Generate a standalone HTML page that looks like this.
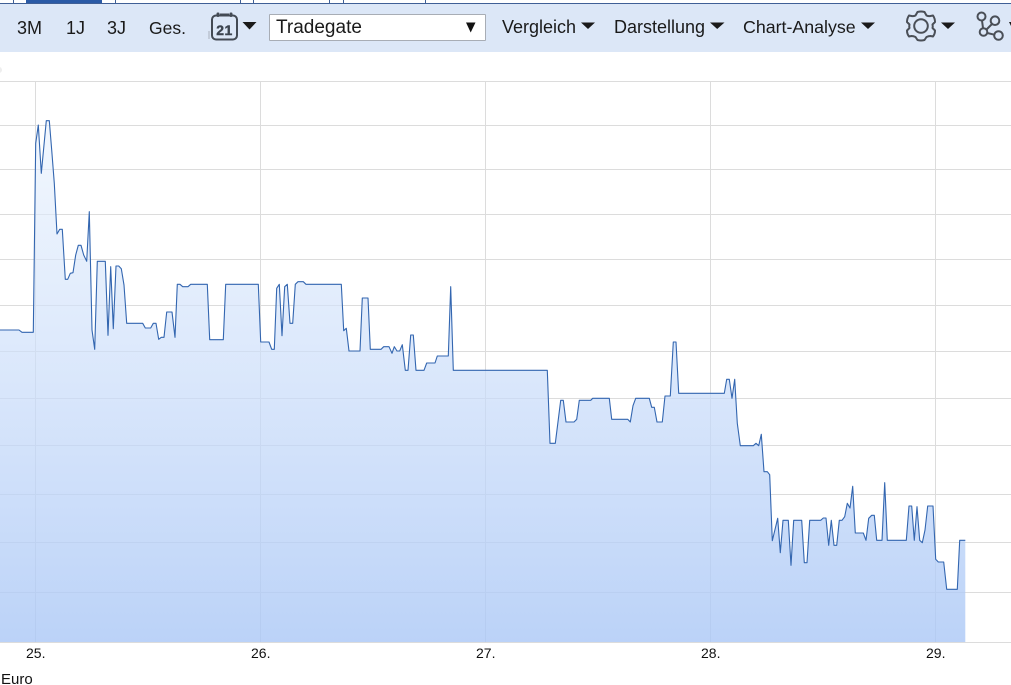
<!DOCTYPE html>
<html>
<head>
<meta charset="utf-8">
<style>
html,body{margin:0;padding:0;background:#fff;width:1011px;height:685px;overflow:hidden}
body{position:relative;font-family:"Liberation Sans",Arial,sans-serif;color:#111}
.t{position:absolute;font-size:18px;line-height:18px;white-space:nowrap;color:#1a1a1a}
.x{position:absolute;font-size:14px;line-height:14px;white-space:nowrap;color:#111}
svg{position:absolute;left:0;top:0}
</style>
</head>
<body>
<svg width="1011" height="685" viewBox="0 0 1011 685" xmlns="http://www.w3.org/2000/svg">
<defs>
<linearGradient id="g" gradientUnits="userSpaceOnUse" x1="0" y1="120" x2="0" y2="642">
<stop offset="0" stop-color="#e9f2fd" stop-opacity="0.6"/>
<stop offset="1" stop-color="#aac7f6" stop-opacity="0.8"/>
</linearGradient>
</defs>
<rect x="0" y="3" width="1011" height="49" fill="#dce7f7"/>
<rect x="0" y="3" width="1011" height="1" fill="#3f5f96"/>
<rect x="26" y="0" width="76" height="3" fill="#2a5aa6"/>
<g fill="#3f5f96">
<rect x="13" y="0" width="1" height="3"/><rect x="115" y="0" width="1" height="3"/><rect x="240" y="0" width="1" height="3"/><rect x="253" y="0" width="1" height="3"/><rect x="329" y="0" width="1" height="3"/><rect x="343" y="0" width="1" height="3"/><rect x="425" y="0" width="1" height="3"/>
</g>
<circle cx="-1" cy="70" r="3" fill="#eeeeee"/>
<g fill="#dcdcdc">
<rect x="0" y="81" width="1011" height="1"/><rect x="0" y="125" width="1011" height="1"/><rect x="0" y="169" width="1011" height="1"/><rect x="0" y="214" width="1011" height="1"/><rect x="0" y="259" width="1011" height="1"/><rect x="0" y="305" width="1011" height="1"/><rect x="0" y="351" width="1011" height="1"/><rect x="0" y="398" width="1011" height="1"/><rect x="0" y="445" width="1011" height="1"/><rect x="0" y="494" width="1011" height="1"/><rect x="0" y="542" width="1011" height="1"/><rect x="0" y="592" width="1011" height="1"/><rect x="0" y="642" width="1011" height="1"/>
<rect x="35" y="81" width="1" height="561"/><rect x="260" y="81" width="1" height="561"/><rect x="485" y="81" width="1" height="561"/><rect x="710" y="81" width="1" height="561"/><rect x="935" y="81" width="1" height="561"/>
</g>
<path fill="url(#g)" d="M0,330 L19,330 22,332.3 33.3,332.3 35.7,143.3 38.3,125 41.3,173.3 46.3,120.7 49.3,120.7 51.7,150 54.3,183.3 57,234 59.7,229.3 62.3,229.3 65.3,279.3 67.7,279.3 70.3,273.3 73,272.7 75.7,255 78.3,245.3 81,245.3 83.7,255 86.7,261.3 89.3,211.7 92,330 94.7,349.3 97.3,261.3 105.3,261.3 108,335.3 110.7,266.7 113.3,328.7 116,266 118.7,266 121.3,268.7 124,285 126.7,323.3 142.7,323.3 145.3,328 150.7,328 153.3,323.3 156,323.3 158.7,339.3 161.3,337.3 164,337.3 166.7,312 172,312 175,337.3 177.3,284.3 180,284.3 182.7,286.7 188,286.7 190.7,284.3 207.3,284.3 209.7,339.7 223.3,339.7 225.7,284.3 258.3,284.3 260.7,342 269,342 271.7,349.3 274.3,349.3 276.7,288.3 279.3,284.3 282,335.7 284.7,286.7 287.3,284.3 290,323.3 292.7,323.3 295.3,284.3 298,281.7 303.3,281.7 306,284.3 341.3,284.3 343.7,330.7 346.3,328.3 349,351 360,351 362.3,298 368,298 370.3,349.3 381,349.3 383.7,346.7 389,346.7 392,353.3 394.3,346.7 397,351 399.7,351 402.3,344.7 405.3,370.3 408,370.3 410.7,335 413.3,335 416,370.3 424,370.3 426.7,363 435,363 437.3,356 448.3,356 450.7,286.7 453.3,370.3 547.3,370.3 550,443.3 555.3,443.3 560.7,400.3 563.3,400.3 566,422 574,422 576.7,419.3 579.3,400.3 590.7,400.3 592.7,398.3 609.3,398.3 611.7,419.3 627.7,419.3 630.3,422 633,405.7 635.7,398.3 649.3,398.3 651.7,407.3 654.3,407.3 657,422 662.3,422 665,396 670.3,396 673.3,342 676,342 678.7,393.3 724.3,393.3 726.7,379.3 729.3,379.3 732,398.3 734.7,379.3 737.3,423.3 740.3,445.7 753.3,445.7 756,443.3 758.7,445.7 761.3,434.3 764,471.7 767.3,471.7 769.7,474.7 772.3,540.7 777.7,518.3 780.3,552.7 783,520.3 788.3,520.3 791,565.3 793.7,520.3 801.7,520.3 804.3,562.7 807,562.7 809.7,520.3 820.7,520.3 823.3,518 826,518 828.7,545.3 831.3,520.3 834,545.3 836.7,545.3 839.3,520.3 842,520.3 844.7,516.7 847.3,503.3 850,508 852.7,486.3 855.3,533 863.3,533 866,540.3 868.7,518.3 871.7,515.3 874.3,515.3 876.7,540.3 882,540.3 884.7,482.7 887.3,540.3 906.3,540.3 909,506 911.7,506 914.3,540.3 917,506.7 919.7,540.3 922.3,542.7 925,530 927.7,506 933,506 935.7,559.3 938.3,562 943.7,562 946.7,589.3 957.3,589.3 959.7,540.3 965.3,540.3 L965.3,642 L0,642 Z"/>
<polyline fill="none" stroke="#3366b0" stroke-width="1.1" stroke-linejoin="round" points="0,330 19,330 22,332.3 33.3,332.3 35.7,143.3 38.3,125 41.3,173.3 46.3,120.7 49.3,120.7 51.7,150 54.3,183.3 57,234 59.7,229.3 62.3,229.3 65.3,279.3 67.7,279.3 70.3,273.3 73,272.7 75.7,255 78.3,245.3 81,245.3 83.7,255 86.7,261.3 89.3,211.7 92,330 94.7,349.3 97.3,261.3 105.3,261.3 108,335.3 110.7,266.7 113.3,328.7 116,266 118.7,266 121.3,268.7 124,285 126.7,323.3 142.7,323.3 145.3,328 150.7,328 153.3,323.3 156,323.3 158.7,339.3 161.3,337.3 164,337.3 166.7,312 172,312 175,337.3 177.3,284.3 180,284.3 182.7,286.7 188,286.7 190.7,284.3 207.3,284.3 209.7,339.7 223.3,339.7 225.7,284.3 258.3,284.3 260.7,342 269,342 271.7,349.3 274.3,349.3 276.7,288.3 279.3,284.3 282,335.7 284.7,286.7 287.3,284.3 290,323.3 292.7,323.3 295.3,284.3 298,281.7 303.3,281.7 306,284.3 341.3,284.3 343.7,330.7 346.3,328.3 349,351 360,351 362.3,298 368,298 370.3,349.3 381,349.3 383.7,346.7 389,346.7 392,353.3 394.3,346.7 397,351 399.7,351 402.3,344.7 405.3,370.3 408,370.3 410.7,335 413.3,335 416,370.3 424,370.3 426.7,363 435,363 437.3,356 448.3,356 450.7,286.7 453.3,370.3 547.3,370.3 550,443.3 555.3,443.3 560.7,400.3 563.3,400.3 566,422 574,422 576.7,419.3 579.3,400.3 590.7,400.3 592.7,398.3 609.3,398.3 611.7,419.3 627.7,419.3 630.3,422 633,405.7 635.7,398.3 649.3,398.3 651.7,407.3 654.3,407.3 657,422 662.3,422 665,396 670.3,396 673.3,342 676,342 678.7,393.3 724.3,393.3 726.7,379.3 729.3,379.3 732,398.3 734.7,379.3 737.3,423.3 740.3,445.7 753.3,445.7 756,443.3 758.7,445.7 761.3,434.3 764,471.7 767.3,471.7 769.7,474.7 772.3,540.7 777.7,518.3 780.3,552.7 783,520.3 788.3,520.3 791,565.3 793.7,520.3 801.7,520.3 804.3,562.7 807,562.7 809.7,520.3 820.7,520.3 823.3,518 826,518 828.7,545.3 831.3,520.3 834,545.3 836.7,545.3 839.3,520.3 842,520.3 844.7,516.7 847.3,503.3 850,508 852.7,486.3 855.3,533 863.3,533 866,540.3 868.7,518.3 871.7,515.3 874.3,515.3 876.7,540.3 882,540.3 884.7,482.7 887.3,540.3 906.3,540.3 909,506 911.7,506 914.3,540.3 917,506.7 919.7,540.3 922.3,542.7 925,530 927.7,506 933,506 935.7,559.3 938.3,562 943.7,562 946.7,589.3 957.3,589.3 959.7,540.3 965.3,540.3"/>

<!-- calendar icon -->
<rect x="212" y="15.500" width="25" height="24" rx="4" fill="none" stroke="#434a54" stroke-width="2"/>
<rect x="216.500" y="12.500" width="3" height="4.500" rx="1.200" fill="#434a54"/>
<rect x="229.500" y="12.500" width="3" height="4.500" rx="1.200" fill="#434a54"/>
<rect x="220" y="13.500" width="9" height="1.500" fill="#434a54"/>
<text x="224.500" y="35" text-anchor="middle" font-family="'Liberation Sans',sans-serif" font-weight="700" font-size="14" letter-spacing="0.5" stroke="#3d4550" stroke-width="0.4" fill="#3d4550">21</text>
<rect x="208.500" y="31" width="1" height="8" fill="#aab2be"/>
<!-- carets -->
<g fill="#1a1a1a">
<path d="M242.500,22 L256.500,22 249.500,29.500 Z"/>
<path d="M581,22.500 L595,22.500 588,29 Z"/>
<path d="M710,22.500 L724.500,22.500 717.200,29 Z"/>
<path d="M861,22.500 L875,22.500 868,29 Z"/>
<path d="M941,22.500 L955,22.500 948,29 Z"/>
<path d="M1009,22 L1016,22 1012.500,29 Z"/>
</g>
<!-- gear -->
<path fill="none" stroke="#4a4f57" stroke-width="2" stroke-linejoin="round" d="M917.500,12 Q921,11 924.500,12 L926.500,15.500 Q928.500,16.500 930.500,16 L933,15.500 Q935,18.500 935,22 L932.500,24.500 Q933,26.500 932.500,28 L935,30.500 Q935,34 933,36.500 L930.500,36 Q928.500,36 926.500,37 L924.500,40 Q921,41 917.500,40 L915.500,37 Q913.500,36 911.500,36 L909,36.500 Q907,34 907,30.500 L909.500,28 Q909,26.500 909.500,24.500 L907,22 Q907,18.500 909,15.500 L911.500,16 Q913.500,16.500 915.500,15.500 Z"/>
<circle cx="921" cy="26" r="6.800" fill="none" stroke="#4a4f57" stroke-width="2"/>
<!-- network -->
<g fill="none" stroke="#4a4f57" stroke-width="2">
<circle cx="981.500" cy="16.500" r="4"/>
<circle cx="995" cy="20.700" r="4.300"/>
<circle cx="983.500" cy="32" r="3.800"/>
<circle cx="998.500" cy="35.500" r="4.300"/>
<path d="M982,20.500 L983,28 M992,24 L986.500,29.500 M987.300,33 L994.300,34.700"/>
</g>
</svg>

<div class="t" style="left:17px;top:19px">3M</div>
<div class="t" style="left:66px;top:19px">1J</div>
<div class="t" style="left:107px;top:19px">3J</div>
<div class="t" style="left:149px;top:19px;font-size:17.500px">Ges.</div>

<div style="position:absolute;left:269px;top:14px;width:215px;height:25px;background:#fff;border:1px solid #a8adb5;border-radius:1px"></div>
<div class="t" style="left:276px;top:19px;font-size:19px">Tradegate</div>
<svg width="20" height="20" viewBox="0 0 20 20" style="left:461px;top:18px" xmlns="http://www.w3.org/2000/svg"><path d="M5,4.500 L14.500,4.500 9.700,14.500 Z" fill="#111"/></svg>

<div class="t" style="left:502px;top:18px">Vergleich</div>
<div class="t" style="left:614px;top:18px">Darstellung</div>
<div class="t" style="left:743px;top:18px;font-size:17.800px">Chart-Analyse</div>

<div class="x" style="left:26px;top:646px">25.</div>
<div class="x" style="left:251px;top:646px">26.</div>
<div class="x" style="left:476px;top:646px">27.</div>
<div class="x" style="left:701px;top:646px">28.</div>
<div class="x" style="left:926px;top:646px">29.</div>
<div class="x" style="left:1px;top:673px;font-size:15px">Euro</div>
</body>
</html>
